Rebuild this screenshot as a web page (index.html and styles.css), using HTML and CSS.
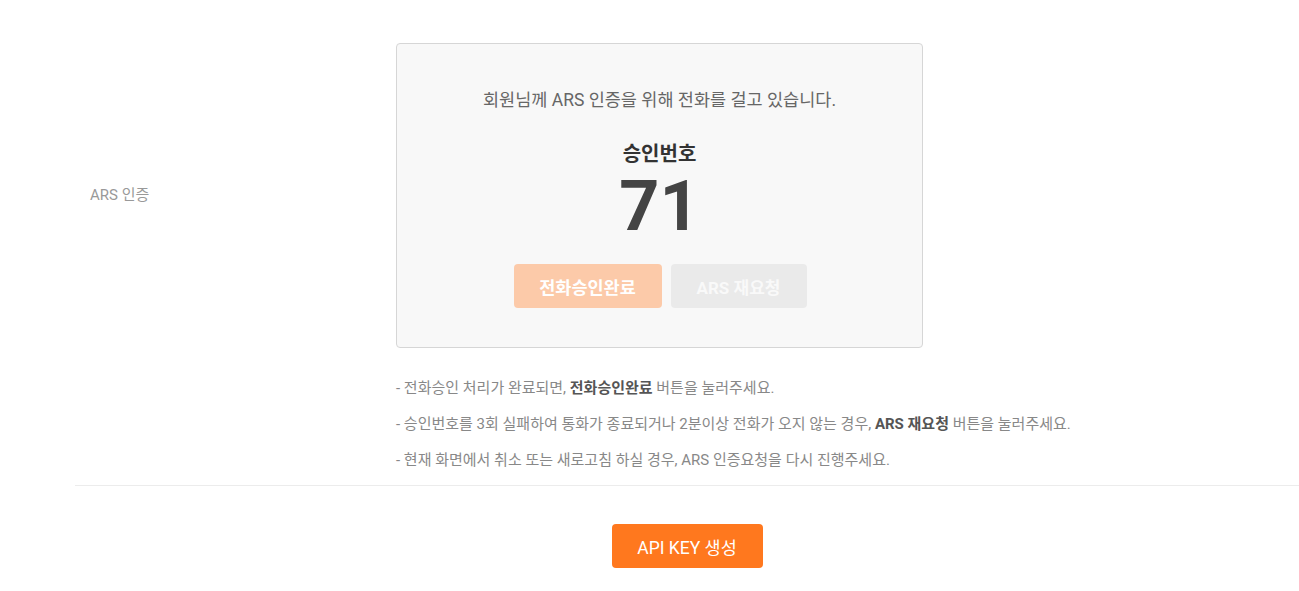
FILE: index.html
```html
<!DOCTYPE html>
<html lang="ko">
<head>
<meta charset="utf-8">
<title>ARS 인증</title>
<link rel="stylesheet" href="styles.css">
</head>
<body>
<div class="page">
  <div class="form-row">
    <div class="label-col">ARS 인증</div>
    <div class="content-col">
      <div class="ars-box">
        <p class="ars-intro">회원님께 ARS 인증을 위해 전화를 걸고 있습니다.</p>
        <p class="ars-title">승인번호</p>
        <p class="ars-number">71</p>
        <div class="ars-buttons">
          <button class="btn btn-done" type="button">전화승인완료</button>
          <button class="btn btn-retry" type="button">ARS 재요청</button>
        </div>
      </div>
      <ul class="notes">
        <li>- 전화승인 처리가 완료되면, <strong>전화승인완료</strong> 버튼을 눌러주세요.</li>
        <li>- 승인번호를 3회 실패하여 통화가 종료되거나 2분이상 전화가 오지 않는 경우, <strong>ARS 재요청</strong> 버튼을 눌러주세요.</li>
        <li>- 현재 화면에서 취소 또는 새로고침 하실 경우, ARS 인증요청을 다시 진행주세요.</li>
      </ul>
    </div>
  </div>
  <div class="actions">
    <button class="btn btn-primary" type="button">API KEY 생성</button>
  </div>
</div>
</body>
</html>
```

FILE: styles.css
```css
* { box-sizing: border-box; }
html, body { margin: 0; padding: 0; background: #fff; }
body {
  font-family: Roboto, "Noto Sans CJK KR", "Noto Sans", sans-serif;
  color: #333;
}
.page {
  padding-top: 43px;
  margin-left: 75px;
}
.form-row {
  display: flex;
  border-bottom: 1px solid #ececec;
  padding-bottom: 15px;
}
.label-col {
  width: 321px;
  flex-shrink: 0;
  padding-left: 15px;
  padding-top: 142px;
  font-size: 15px;
  line-height: 20px;
  color: #999;
}
.content-col {
  display: flex;
  flex-direction: column;
}
.ars-box {
  width: 527px;
  height: 305px;
  background: #f8f8f8;
  border: 1px solid #d6d6d6;
  border-radius: 4px;
  padding-top: 44px;
  text-align: center;
}
.ars-box p { margin: 0; }
.ars-intro {
  font-size: 17.5px;
  line-height: 24px;
  color: #666;
}
.ars-title {
  margin-top: 29px !important;
  font-size: 20px;
  line-height: 26px;
  font-weight: 700;
  color: #333;
}
.ars-number {
  margin-top: 4px !important;
  font-size: 70px;
  line-height: 70px;
  font-weight: 700;
  color: #444;
}
.ars-buttons {
  display: flex;
  justify-content: center;
  gap: 9px;
  margin-top: 23px;
  padding-left: 1px;
}
.btn {
  font-family: Roboto, "Noto Sans CJK KR", "Noto Sans", sans-serif;
  border: 0;
  border-radius: 4px;
  height: 44px;
  font-size: 17.5px;
  cursor: pointer;
  padding: 0;
}
.btn-done {
  width: 148px;
  background: #fccaa9;
  color: #fff;
  font-weight: 700;
}
.btn-retry {
  width: 136px;
  background: #eaeaea;
  color: #f9f9f9;
  font-weight: 700;
  font-size: 17px;
}
.notes {
  list-style: none;
  margin: 30px 0 0;
  padding: 0;
  font-size: 15px;
  line-height: 20px;
  color: #888;
}
.notes li + li { margin-top: 16px; }
.notes strong { color: #555; font-weight: 700; }
.actions {
  display: flex;
  justify-content: center;
  padding-top: 38px;
}
.btn-primary {
  width: 151px;
  background: #ff781e;
  color: #fff;
  font-weight: 400;
}
```
